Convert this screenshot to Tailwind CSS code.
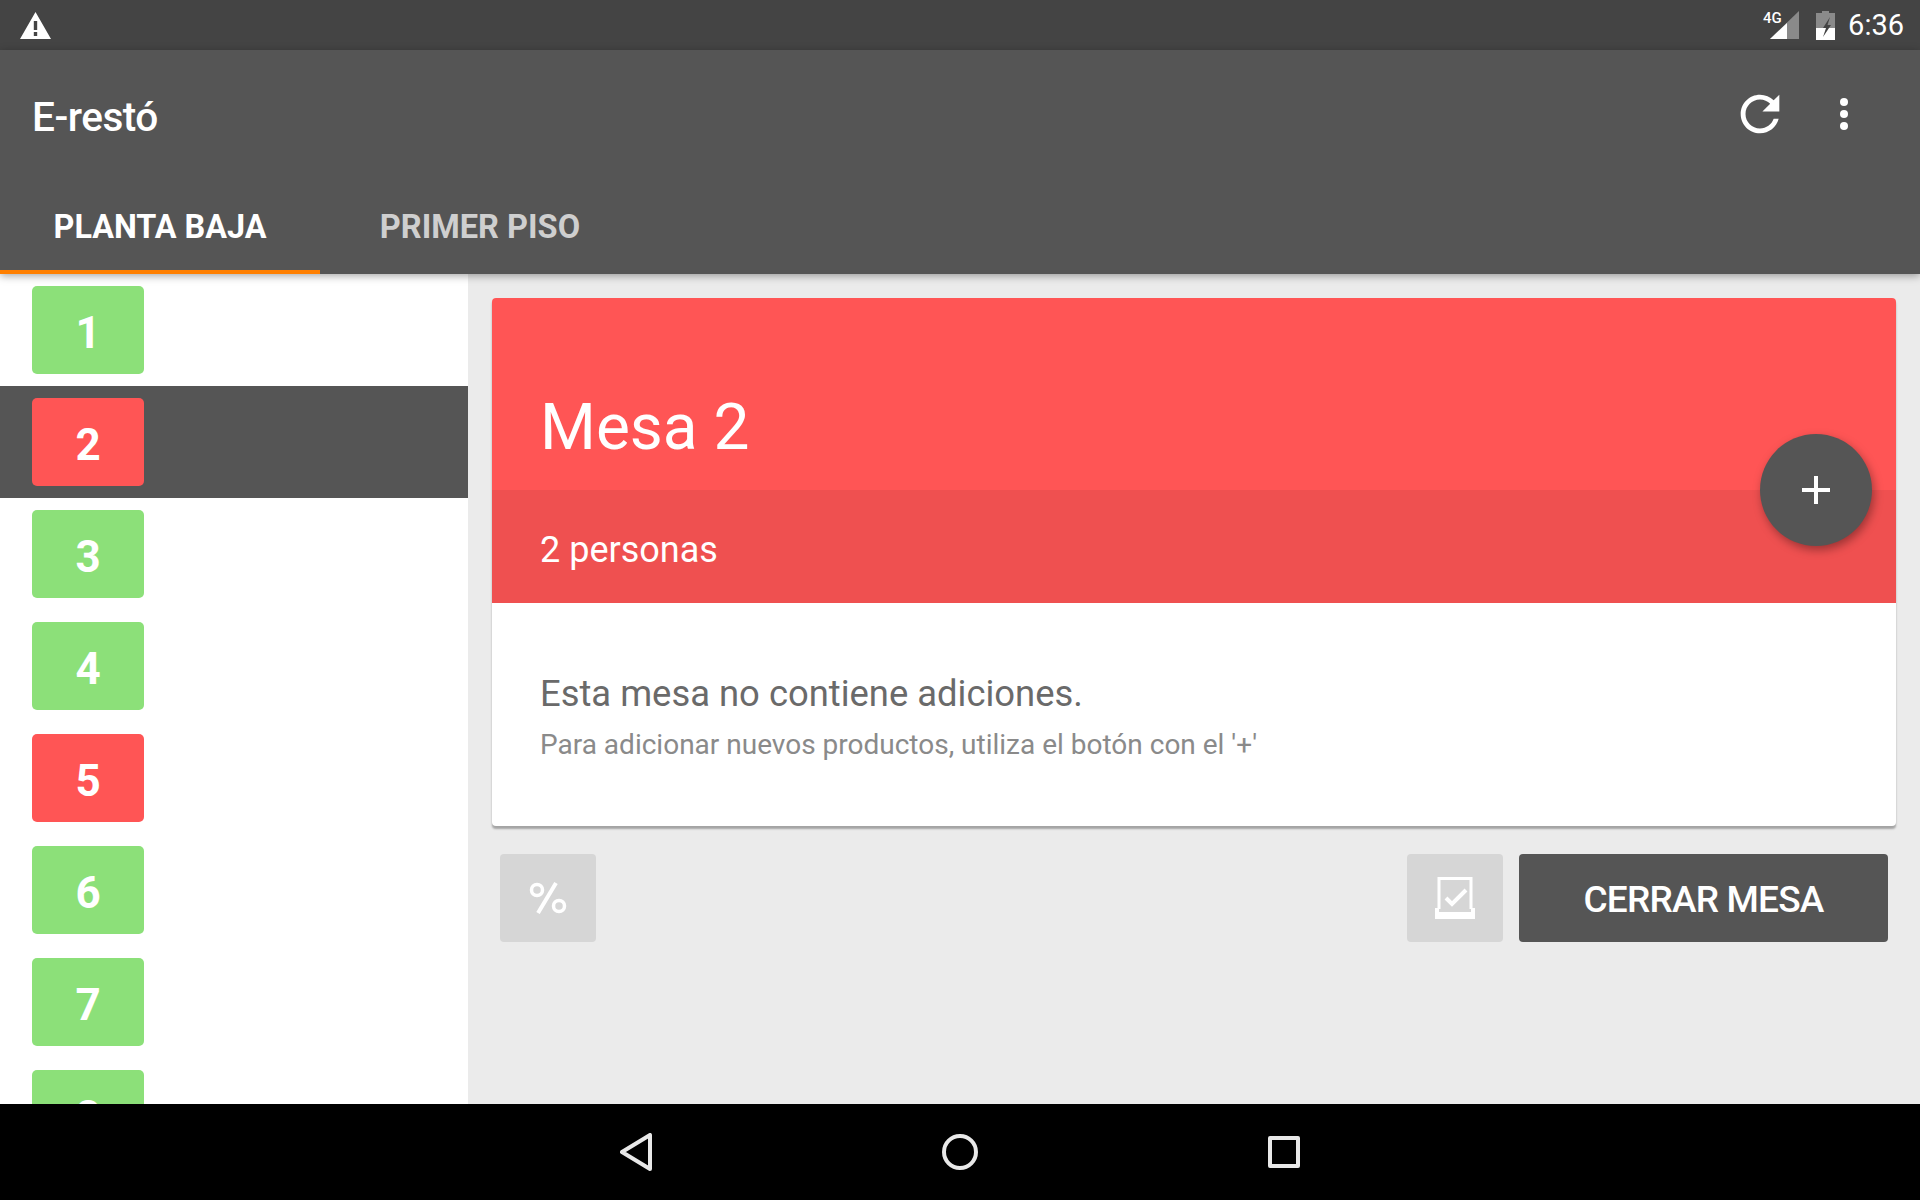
<!DOCTYPE html>
<html lang="es">
<head>
  <meta charset="UTF-8" />
  <title>E-restó</title>
  <script src="https://cdn.jsdelivr.net/npm/@tailwindcss/browser@4"></script>
</head>
<body class="flex h-screen w-screen flex-col overflow-hidden bg-[#ebebeb] font-['Roboto',sans-serif] text-white">

  <!-- Status bar -->
  <div class="flex h-[50px] shrink-0 items-center justify-between bg-[#444444] pl-[20px] pr-[16px]">
    <svg class="mt-[1px] h-[27px] w-[31px]" viewBox="0 0 31 27"><path fill="#fff" fill-rule="evenodd" d="M15.5 0 L31 27 H0 Z M13.8 9 V18 H17.2 V9 Z M13.8 20 V24 H17.2 V20 Z"/></svg>
    <div class="flex items-center">
      <div class="relative h-[28px] w-[36px]">
        <span class="absolute left-0 top-[-1px] text-[15px] font-medium leading-[16px]">4G</span>
        <svg class="absolute left-[7px] top-0 h-[28px] w-[29px]" viewBox="0 0 29 28"><path fill="#8a8a8a" d="M29 0 V28 H0 Z"/><path fill="#fff" d="M17 12 V28 H0 Z"/></svg>
      </div>
      <svg class="ml-[17px] h-[29px] w-[19px]" viewBox="0 0 19 29"><path fill="#8a8a8a" d="M6 0 H13 V2 H19 V17 H0 V2 H6 Z"/><path fill="#fff" d="M0 17 H19 V29 H0 Z"/><path fill="#444" d="M14 6 L7 17 H10 L7 26 L15 14 H11.5 L14 6 Z"/></svg>
      <span class="ml-[13px] text-[29px] leading-none">6:36</span>
    </div>
  </div>

  <!-- Toolbar and tabs -->
  <header class="relative z-10 h-[224px] shrink-0 bg-[#555555] shadow-[0_2px_8px_rgba(0,0,0,0.35)]">
    <div class="flex h-[112px] items-center justify-between pl-[32px] pr-[72px] pt-[22px]">
      <span class="text-[40.6px] font-medium leading-none tracking-[-0.5px]">E-restó</span>
      <div class="mb-[6px] flex items-center gap-[51px]">
        <svg class="h-[58px] w-[58px]" viewBox="0 0 24 24"><path fill="#fff" d="M17.65 6.35C16.2 4.9 14.21 4 12 4c-4.42 0-7.99 3.58-7.99 8s3.57 8 7.99 8c3.73 0 6.84-2.55 7.73-6h-2.08c-.82 2.33-3.04 4-5.65 4-3.31 0-6-2.69-6-6s2.69-6 6-6c1.66 0 3.14.69 4.22 1.78L13 11h7V4l-2.35 2.35z"/></svg>
        <div class="flex flex-col gap-[4px]">
          <span class="h-[8px] w-[8px] rounded-full bg-white"></span>
          <span class="h-[8px] w-[8px] rounded-full bg-white"></span>
          <span class="h-[8px] w-[8px] rounded-full bg-white"></span>
        </div>
      </div>
    </div>
    <div class="flex h-[112px]">
      <div class="flex w-[320px] items-center justify-center border-b-4 border-[#ff7f00] pt-[22px] text-[32.4px] font-bold">PLANTA BAJA</div>
      <div class="flex w-[320px] items-center justify-center border-b-4 border-transparent pt-[22px] text-[32.6px] font-bold text-[#cfcfcf]">PRIMER PISO</div>
    </div>
  </header>

  <div class="flex min-h-0 flex-1">
    <!-- Mesas -->
    <aside class="w-[468px] shrink-0 overflow-hidden bg-white">
      <div class="flex h-[112px] items-center pl-[32px]"><div class="flex h-[88px] w-[112px] items-center justify-center rounded-[5px] bg-[#8ce079] pt-[5px] text-[44px] font-bold">1</div></div>
      <div class="flex h-[112px] items-center bg-[#555555] pl-[32px]"><div class="flex h-[88px] w-[112px] items-center justify-center rounded-[5px] bg-[#ff5555] pt-[5px] text-[44px] font-bold">2</div></div>
      <div class="flex h-[112px] items-center pl-[32px]"><div class="flex h-[88px] w-[112px] items-center justify-center rounded-[5px] bg-[#8ce079] pt-[5px] text-[44px] font-bold">3</div></div>
      <div class="flex h-[112px] items-center pl-[32px]"><div class="flex h-[88px] w-[112px] items-center justify-center rounded-[5px] bg-[#8ce079] pt-[5px] text-[44px] font-bold">4</div></div>
      <div class="flex h-[112px] items-center pl-[32px]"><div class="flex h-[88px] w-[112px] items-center justify-center rounded-[5px] bg-[#ff5555] pt-[5px] text-[44px] font-bold">5</div></div>
      <div class="flex h-[112px] items-center pl-[32px]"><div class="flex h-[88px] w-[112px] items-center justify-center rounded-[5px] bg-[#8ce079] pt-[5px] text-[44px] font-bold">6</div></div>
      <div class="flex h-[112px] items-center pl-[32px]"><div class="flex h-[88px] w-[112px] items-center justify-center rounded-[5px] bg-[#8ce079] pt-[5px] text-[44px] font-bold">7</div></div>
      <div class="flex h-[112px] items-center pl-[32px]"><div class="flex h-[88px] w-[112px] items-center justify-center rounded-[5px] bg-[#8ce079] pt-[5px] text-[44px] font-bold">8</div></div>
    </aside>

    <!-- Detalle -->
    <main class="flex-1 px-[24px] pt-[24px]">
      <section class="relative rounded-[4px] bg-white shadow-[0_3px_2px_rgba(0,0,0,0.3)]">
        <div class="flex h-[192px] items-end rounded-t-[4px] bg-[#ff5555] pb-[30px] pl-[48px] text-[64px] leading-none">Mesa 2</div>
        <div class="flex h-[113px] items-center bg-[#ef5050] pl-[48px] pt-[6px] text-[36px]">2 personas</div>
        <div class="h-[223px] pl-[48px] pt-[70px]">
          <p class="text-[36.4px] leading-[42px] text-[#6a6a6a]">Esta mesa no contiene adiciones.</p>
          <p class="mt-[13px] text-[28px] leading-[34px] text-[#8a8a8a]">Para adicionar nuevos productos, utiliza el botón con el '+'</p>
        </div>
        <button class="absolute left-[1268px] top-[136px] flex h-[112px] w-[112px] items-center justify-center rounded-full bg-[#555555] shadow-[2px_4px_10px_rgba(0,0,0,0.35)]">
          <svg class="h-[28px] w-[28px]" viewBox="0 0 28 28"><path fill="#fff" d="M12 0 H16 V12 H28 V16 H16 V28 H12 V16 H0 V12 H12 Z"/></svg>
        </button>
      </section>

      <div class="mt-[28px] flex items-center justify-between px-[8px]">
        <div class="flex h-[88px] w-[96px] items-center justify-center rounded-[4px] bg-[#d6d6d6]">
          <svg class="h-[32px] w-[38px]" viewBox="0 0 38 32" fill="none" stroke="#fff" stroke-width="3.5"><circle cx="8" cy="8" r="5.5"/><circle cx="30" cy="24" r="5.5"/><path stroke-width="4" d="M27 1 L9 31"/></svg>
        </div>
        <div class="flex gap-[16px]">
          <div class="flex h-[88px] w-[96px] items-center justify-center rounded-[4px] bg-[#d6d6d6]">
            <svg class="h-[42px] w-[40px]" viewBox="0 0 40 42" fill="none" stroke="#fff" stroke-width="3"><path d="M4 32 V1.5 H36 V32"/><path stroke-width="0" fill="#fff" d="M0 31 H4 V35 H36 V31 H40 V42 H0 Z"/><path stroke-width="4" d="M11 21 L17 27 L31 13"/></svg>
          </div>
          <button class="flex h-[88px] w-[369px] items-center justify-center rounded-[4px] bg-[#555555] pt-[4px] text-[37px] font-medium tracking-[-0.8px]">CERRAR MESA</button>
        </div>
      </div>
    </main>
  </div>

  <!-- Navigation bar -->
  <nav class="relative z-10 flex h-[96px] shrink-0 items-center justify-center gap-[290px] bg-black">
    <svg class="h-[38px] w-[32px]" viewBox="0 0 32 38" fill="none" stroke="#e8e8e8" stroke-width="4" stroke-linejoin="round"><path d="M30 2 V36 L2 19 Z"/></svg>
    <svg class="h-[36px] w-[36px]" viewBox="0 0 36 36" fill="none" stroke="#e8e8e8" stroke-width="4"><circle cx="18" cy="18" r="16"/></svg>
    <svg class="h-[32px] w-[32px]" viewBox="0 0 32 32" fill="none" stroke="#e8e8e8" stroke-width="4" stroke-linejoin="round"><rect x="2" y="2" width="28" height="28"/></svg>
  </nav>
</body>
</html>
